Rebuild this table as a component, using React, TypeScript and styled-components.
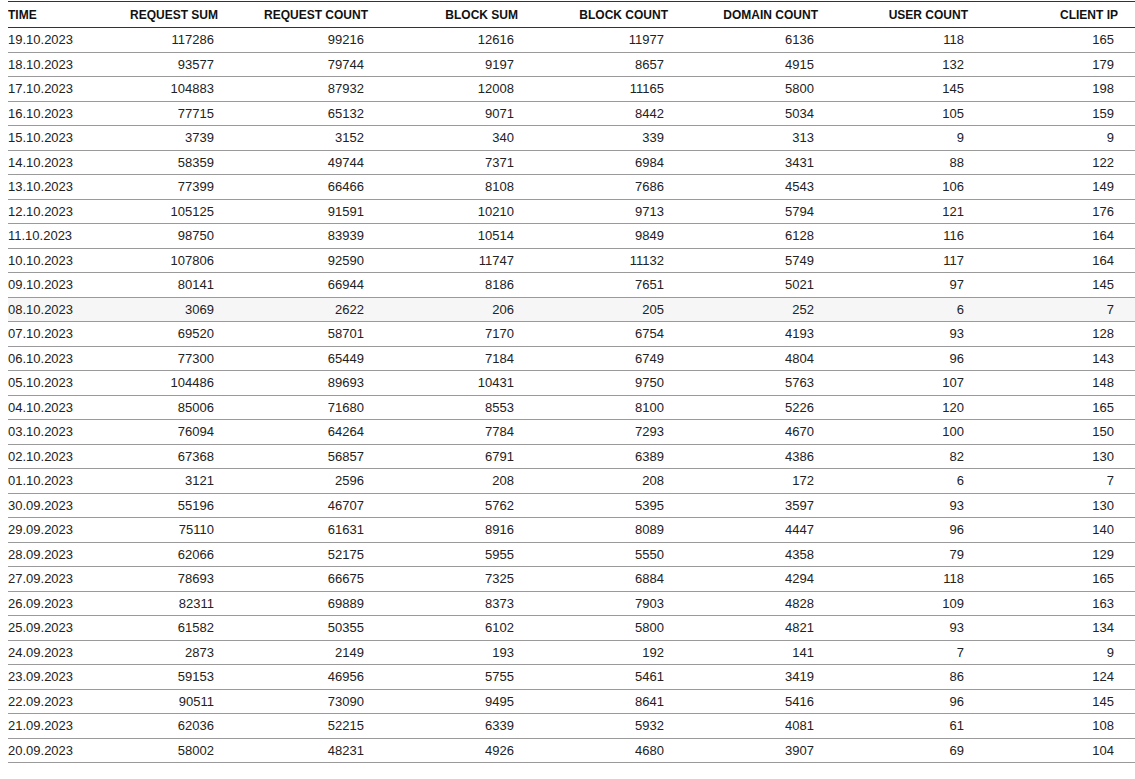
import React from "react";
import styled, { createGlobalStyle } from "styled-components";

const GlobalStyle = createGlobalStyle`
  body {
    margin: 1px 0 0 8px;
    background: #fff;
    font-family: "Liberation Sans", Arial, sans-serif;
    color: #222;
  }
`;

const columns = [
  "TIME",
  "REQUEST SUM",
  "REQUEST COUNT",
  "BLOCK SUM",
  "BLOCK COUNT",
  "DOMAIN COUNT",
  "USER COUNT",
  "CLIENT IP",
];

const rows: [string, number, number, number, number, number, number, number][] = [
  ["19.10.2023", 117286, 99216, 12616, 11977, 6136, 118, 165],
  ["18.10.2023", 93577, 79744, 9197, 8657, 4915, 132, 179],
  ["17.10.2023", 104883, 87932, 12008, 11165, 5800, 145, 198],
  ["16.10.2023", 77715, 65132, 9071, 8442, 5034, 105, 159],
  ["15.10.2023", 3739, 3152, 340, 339, 313, 9, 9],
  ["14.10.2023", 58359, 49744, 7371, 6984, 3431, 88, 122],
  ["13.10.2023", 77399, 66466, 8108, 7686, 4543, 106, 149],
  ["12.10.2023", 105125, 91591, 10210, 9713, 5794, 121, 176],
  ["11.10.2023", 98750, 83939, 10514, 9849, 6128, 116, 164],
  ["10.10.2023", 107806, 92590, 11747, 11132, 5749, 117, 164],
  ["09.10.2023", 80141, 66944, 8186, 7651, 5021, 97, 145],
  ["08.10.2023", 3069, 2622, 206, 205, 252, 6, 7],
  ["07.10.2023", 69520, 58701, 7170, 6754, 4193, 93, 128],
  ["06.10.2023", 77300, 65449, 7184, 6749, 4804, 96, 143],
  ["05.10.2023", 104486, 89693, 10431, 9750, 5763, 107, 148],
  ["04.10.2023", 85006, 71680, 8553, 8100, 5226, 120, 165],
  ["03.10.2023", 76094, 64264, 7784, 7293, 4670, 100, 150],
  ["02.10.2023", 67368, 56857, 6791, 6389, 4386, 82, 130],
  ["01.10.2023", 3121, 2596, 208, 208, 172, 6, 7],
  ["30.09.2023", 55196, 46707, 5762, 5395, 3597, 93, 130],
  ["29.09.2023", 75110, 61631, 8916, 8089, 4447, 96, 140],
  ["28.09.2023", 62066, 52175, 5955, 5550, 4358, 79, 129],
  ["27.09.2023", 78693, 66675, 7325, 6884, 4294, 118, 165],
  ["26.09.2023", 82311, 69889, 8373, 7903, 4828, 109, 163],
  ["25.09.2023", 61582, 50355, 6102, 5800, 4821, 93, 134],
  ["24.09.2023", 2873, 2149, 193, 192, 141, 7, 9],
  ["23.09.2023", 59153, 46956, 5755, 5461, 3419, 86, 124],
  ["22.09.2023", 90511, 73090, 9495, 8641, 5416, 96, 145],
  ["21.09.2023", 62036, 52215, 6339, 5932, 4081, 61, 108],
  ["20.09.2023", 58002, 48231, 4926, 4680, 3907, 69, 104],
];

// row under the mouse pointer in the screenshot
const HOVER_ROW = "08.10.2023";

const Table = styled.table`
  width: 1127px;
  table-layout: fixed;
  border-collapse: collapse;
  border-top: 1px solid #333;
  font-size: 13px;
`;

const Col = styled.col<{ $first?: boolean }>`
  width: ${(p) => (p.$first ? "77px" : "150px")};
`;

const HeadCell = styled.th<{ $first?: boolean }>`
  height: 26px;
  box-sizing: border-box;
  padding: 0 ${(p) => (p.$first ? "0" : "17px")} 0 0;
  text-align: ${(p) => (p.$first ? "left" : "right")};
  font-size: 12px;
  font-weight: bold;
  color: #111;
  border-bottom: 1px solid #333;
  white-space: nowrap;
`;

const Row = styled.tr<{ $active?: boolean }>`
  background: ${(p) => (p.$active ? "#f6f6f6" : "transparent")};
`;

const Cell = styled.td<{ $first?: boolean }>`
  height: 24.5px;
  box-sizing: border-box;
  padding: 0 ${(p) => (p.$first ? "0" : "21px")} 0 0;
  text-align: ${(p) => (p.$first ? "left" : "right")};
  border-bottom: 1px solid #9a9a9a;
  white-space: nowrap;
`;

export default function App() {
  return (
    <>
      <GlobalStyle />
      <Table>
        <colgroup>
          {columns.map((c, i) => (
            <Col key={c} $first={i === 0} />
          ))}
        </colgroup>
        <thead>
          <tr>
            {columns.map((c, i) => (
              <HeadCell key={c} $first={i === 0}>
                {c}
              </HeadCell>
            ))}
          </tr>
        </thead>
        <tbody>
          {rows.map((r) => (
            <Row key={r[0]} $active={r[0] === HOVER_ROW}>
              {r.map((v, i) => (
                <Cell key={i} $first={i === 0}>
                  {v}
                </Cell>
              ))}
            </Row>
          ))}
        </tbody>
      </Table>
    </>
  );
}
